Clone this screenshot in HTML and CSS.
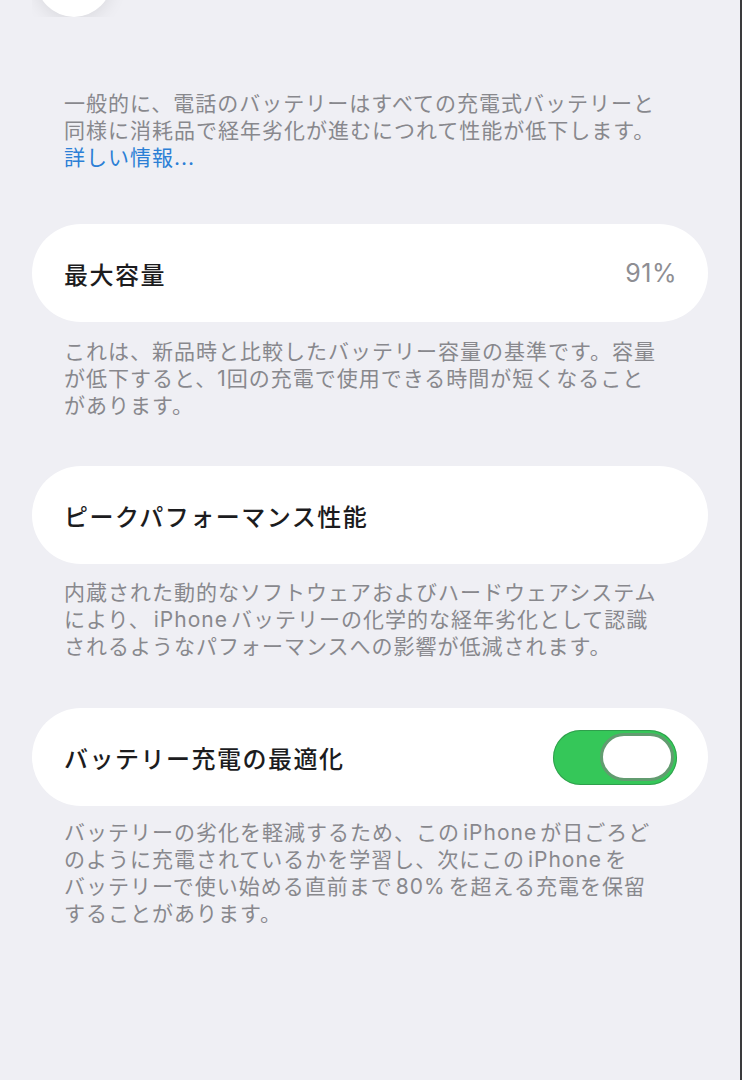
FILE: index.html
```html
<!DOCTYPE html>
<html lang="ja">
<head>
<meta charset="utf-8">
<title>バッテリーの状態</title>
<link rel="stylesheet" href="styles.css">
</head>
<body>
<div class="page">
  <div class="top-clip"><div class="top-circle"></div></div>

  <p class="note first">一般的に、電話のバッテリーはすべての充電式バッテリーと<br>同様に消耗品で経年劣化が進むにつれて性能が低下します。<br><span class="link">詳しい情報...</span></p>

  <div class="card c1">
    <span class="title">最大容量</span>
    <span class="value">91%</span>
  </div>
  <p class="note n2">これは、新品時と比較したバッテリー容量の基準です。容量<br>が低下すると、1回の充電で使用できる時間が短くなること<br>があります。</p>

  <div class="card c2">
    <span class="title">ピークパフォーマンス性能</span>
  </div>
  <p class="note n3">内蔵された動的なソフトウェアおよびハードウェアシステム<br>により、<span class="en">iPhone</span>バッテリーの化学的な経年劣化として認識<br>されるようなパフォーマンスへの影響が低減されます。</p>

  <div class="card c3">
    <span class="title">バッテリー充電の最適化</span>
    <span class="toggle"><span class="knob"></span></span>
  </div>
  <p class="note n4">バッテリーの劣化を軽減するため、この<span class="en">iPhone</span>が日ごろど<br>のように充電されているかを学習し、次にこの<span class="en">iPhone</span>を<br>バッテリーで使い始める直前まで<span class="en">80%</span>を超える充電を保留<br>することがあります。</p>
</div>
</body>
</html>
```

FILE: styles.css
```css
html, body {
  margin: 0;
  padding: 0;
  background: #efeff4;
}
body {
  font-family: "Inter", "Noto Sans CJK JP", sans-serif;
}
.page {
  box-sizing: border-box;
  width: 742px;
  min-height: 1080px;
  padding: 0 32px 0 32px;
  border-right: 2px solid #3a3a3c;
  background: #efeff4;
  overflow: hidden;
}
.top-clip {
  height: 17px;
  overflow: hidden;
  padding-left: 4px;
  display: flex;
  align-items: flex-end;
}
.top-circle {
  flex: none;
  width: 76px;
  height: 76px;
  border-radius: 50%;
  background: #ffffff;
  box-shadow: 0 4px 18px rgba(0, 0, 0, 0.09);
}
.note {
  margin: 0;
  padding-left: 32px;
  font-size: 21px;
  letter-spacing: 1px;
  line-height: 27px;
  color: #88888d;
  white-space: nowrap;
}
.note.first { margin-top: 73px; }
.note.n2 { margin-top: 16px; }
.note.n3 { margin-top: 15px; }
.note.n4 { margin-top: 13px; }
.en {
  margin: 0 3px;
}
.link {
  color: #2c7fd6;
}
.card {
  box-sizing: border-box;
  height: 98px;
  border-radius: 49px;
  background: #ffffff;
  display: flex;
  align-items: center;
  justify-content: space-between;
  padding: 0 31px 0 32px;
}
.card.c1 { margin-top: 53px; }
.card.c2 { margin-top: 47px; }
.card.c3 { margin-top: 48px; }
.title {
  font-size: 24px;
  letter-spacing: 1.5px;
  font-weight: 500;
  color: #1c1c1e;
  white-space: nowrap;
}
.value {
  font-size: 25px;
  letter-spacing: 0.5px;
  color: #8e8e93;
}
.toggle {
  box-sizing: border-box;
  width: 124px;
  height: 55px;
  border-radius: 28px;
  background: #35c759;
  box-shadow: inset 0 0 0 1px rgba(40, 110, 60, 0.45);
  display: flex;
  justify-content: flex-end;
  align-items: center;
  padding: 0 3px;
}
.knob {
  box-sizing: border-box;
  width: 74px;
  height: 48px;
  border-radius: 24px;
  background: #ffffff;
  border: 3px solid #629c70;
}
```
